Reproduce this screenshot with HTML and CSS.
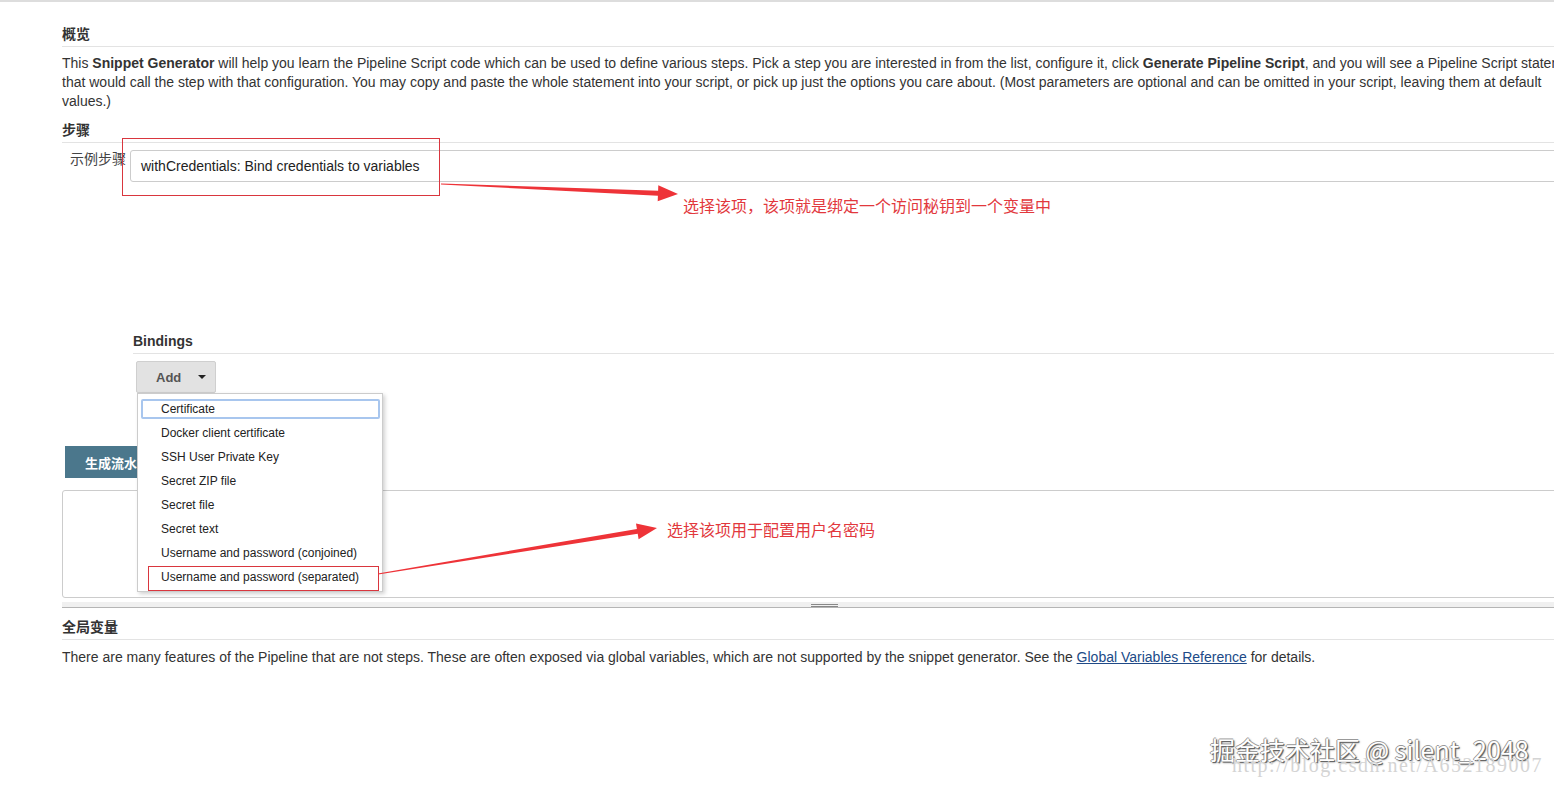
FILE: index.html
```html
<!DOCTYPE html>
<html lang="zh-CN">
<head>
    <meta charset="UTF-8">
    <title>Pipeline Syntax</title>
    <link rel="stylesheet" href="styles.css">
</head>
<body>
    <div class="topbar"></div>

    <div class="page">
        <div class="section-title">概览</div>
        <p class="intro">This <b>Snippet Generator</b> will help you learn the Pipeline Script code which can be used to define various steps. Pick a step you are interested in from the list, configure it, click <b>Generate Pipeline Script</b>, and you will see a Pipeline Script statement that would call the step with that configuration. You may copy and paste the whole statement into your script, or pick up just the options you care about. (Most parameters are optional and can be omitted in your script, leaving them at default values.)</p>

        <div class="section-title steps">步骤</div>
        <div class="step-row">
            <label class="step-label">示例步骤</label>
            <div class="step-select">withCredentials: Bind credentials to variables</div>
        </div>

        <div class="bindings">
            <div class="section-title sub">Bindings</div>
            <div class="add-wrap">
                <button class="add-btn">Add <span class="caret"></span></button>
                <ul class="menu">
                    <li class="focused">Certificate</li>
                    <li>Docker client certificate</li>
                    <li>SSH User Private Key</li>
                    <li>Secret ZIP file</li>
                    <li>Secret file</li>
                    <li>Secret text</li>
                    <li>Username and password (conjoined)</li>
                    <li>Username and password (separated)</li>
                </ul>
            </div>
        </div>

        <button class="generate-btn">生成流水线脚本</button>
        <div class="snippet"></div>
        <div class="resizer"><span class="grip"></span></div>

        <div class="section-title globals">全局变量</div>
        <p class="globals-text">There are many features of the Pipeline that are not steps. These are often exposed via global variables, which are not supported by the snippet generator. See the <a href="#">Global Variables Reference</a> for details.</p>
    </div>

    <!-- red notes drawn on top of the form -->
    <svg class="marks" width="1554" height="786" viewBox="0 0 1554 786">
        <rect x="122.5" y="138.5" width="317" height="57" fill="none" stroke="#d9363e" stroke-width="1"/>
        <rect x="148.5" y="566.5" width="230" height="24" fill="none" stroke="#d9363e" stroke-width="1"/>
        <polygon fill="#ee3338" points="441,183.5 658.1,190.7 658.3,185.2 678,194 657.7,201.2 657.9,195.7 441,184.5"/>
        <polygon fill="#ee3338" points="377.9,573.5 636.9,528.9 636,523.4 657,528 638.6,539.2 637.7,533.7 378.1,574.5"/>
    </svg>
    <span class="note note-step">选择该项，该项就是绑定一个访问秘钥到一个变量中</span>
    <span class="note note-user">选择该项用于配置用户名密码</span>

    <div class="watermark">
        <span class="wm-main">掘金技术社区 @ silent_2048</span>
        <span class="wm-url">http://blog.csdn.net/A652189007</span>
    </div>
</body>
</html>
```

FILE: styles.css
```css
body {
    margin: 0;
    height: 786px;
    overflow: hidden;
    position: relative;
    font-family: "Liberation Sans", Arial, "Noto Sans CJK SC", sans-serif;
    font-size: 14px;
    color: #333;
    background: #fff;
}

.topbar {
    border-top: 2px solid #ddd;
}

.page {
    width: 1590px;
    padding: 22px 0 0 62px;
}

.section-title {
    font-weight: bold;
    font-size: 14px;
    line-height: 20px;
    padding-bottom: 2px;
    border-bottom: 1px solid #e3e3e3;
}

.intro {
    width: 1524px;
    margin: 7px 0 0;
    line-height: 19px;
}

.section-title.steps {
    margin-top: 9px;
}

.step-row {
    display: flex;
    margin-top: 7px;
}

.step-label {
    width: 60px;
    padding-left: 8px;
    line-height: 18px;
    color: #444;
}

.step-select {
    flex: 1;
    height: 30px;
    line-height: 30px;
    padding-left: 10px;
    border: 1px solid #ccc;
    border-radius: 3px;
    color: #222;
}

.bindings {
    margin: 149px 0 0 71px;
}

.section-title.sub {
    color: #333;
}

.add-wrap {
    position: relative;
    display: inline-block;
    margin: 7px 0 0 3px;
}

.add-btn {
    width: 80px;
    height: 32px;
    padding: 0 0 0 19px;
    display: flex;
    align-items: center;
    background: #e2e2e2;
    border: 1px solid #cfcfcf;
    border-radius: 2px;
    font-family: inherit;
    font-size: 13px;
    font-weight: bold;
    color: #555;
}

.caret {
    margin-left: 17px;
    border-left: 4px solid transparent;
    border-right: 4px solid transparent;
    border-top: 4px solid #222;
}

.menu {
    position: absolute;
    top: 32px;
    left: 1px;
    z-index: 5;
    width: 239px;
    margin: 0;
    padding: 5px 2px 4px 3px;
    list-style: none;
    display: flex;
    flex-direction: column;
    gap: 4px;
    background: #fff;
    border: 1px solid #ccc;
    box-shadow: 2px 2px 4px rgba(0, 0, 0, 0.18);
}

.menu li {
    height: 16px;
    line-height: 16px;
    padding-left: 18px;
    border: 2px solid transparent;
    border-radius: 2px;
    font-size: 12px;
    color: #222;
}

.menu li.focused {
    border-color: #a8c6ee;
}

.generate-btn {
    display: block;
    margin: 53px 0 0 3px;
    height: 32px;
    padding: 0 20px;
    background: #4b778c;
    border: none;
    font-family: inherit;
    font-size: 13px;
    font-weight: bold;
    color: #fff;
}

.snippet {
    margin-top: 12px;
    height: 106px;
    border: 1px solid #ccc;
    border-radius: 3px;
}

.resizer {
    margin-top: 4px;
    height: 5px;
    background: #f0f0f0;
    border-bottom: 1px solid #b5b5b5;
    display: flex;
    justify-content: center;
    align-items: flex-end;
    width: 1525px;
}

.grip {
    width: 27px;
    height: 1px;
    border-top: 1px solid #888;
    border-bottom: 1px solid #888;
}

.section-title.globals {
    margin-top: 9px;
}

.globals-text {
    margin: 8px 0 0;
    line-height: 19px;
}

.globals-text a {
    color: #204a87;
}

.marks {
    position: absolute;
    top: 0;
    left: 0;
    pointer-events: none;
    z-index: 10;
}

.note {
    position: absolute;
    z-index: 10;
    font-family: "Noto Sans CJK SC", sans-serif;
    font-size: 16px;
    line-height: 20px;
    color: #e2383d;
}

.note-step {
    left: 683px;
    top: 195px;
}

.note-user {
    left: 667px;
    top: 519px;
}

.watermark {
    position: absolute;
    left: 1210px;
    top: 731px;
    width: 340px;
}

.wm-main {
    display: block;
    font-family: "Noto Sans CJK SC", sans-serif;
    font-size: 25px;
    line-height: 36px;
    color: #fff;
    text-shadow: 1px 1px 0 #666, -1px 0 0 #999, 0 -1px 0 #999, 1px 1px 2px #555;
}

.wm-url {
    position: absolute;
    left: 22px;
    top: 23px;
    font-family: "Liberation Serif", serif;
    font-size: 20px;
    letter-spacing: 1.5px;
    color: #d4d4d4;
    white-space: nowrap;
}
```
